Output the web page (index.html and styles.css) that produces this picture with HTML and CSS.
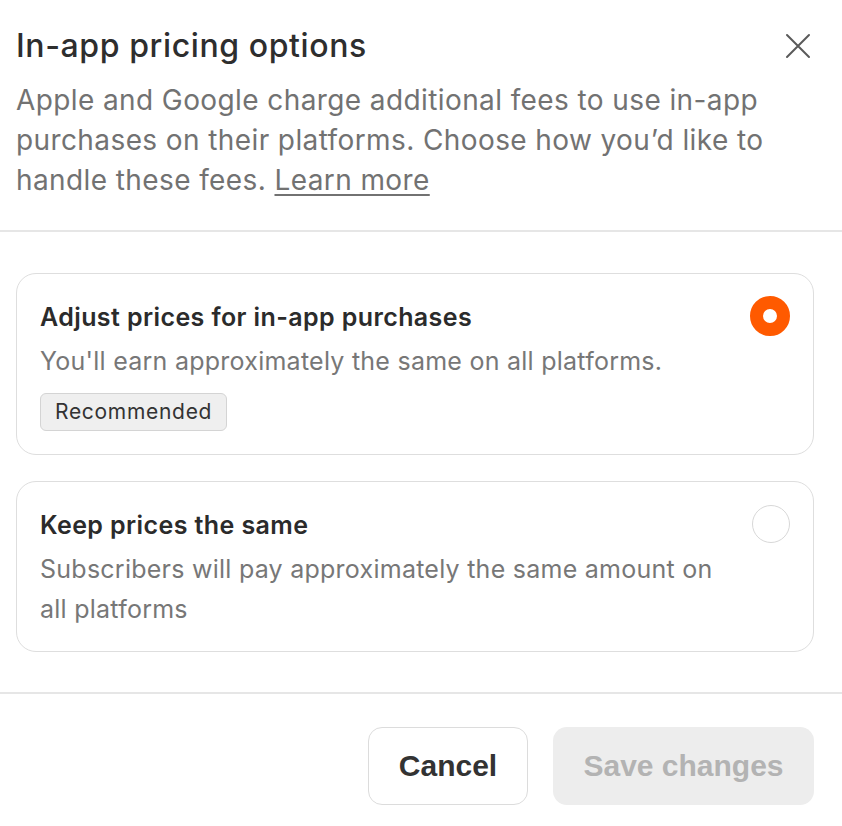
FILE: index.html
```html
<!DOCTYPE html>
<html lang="en">
<head>
    <meta charset="UTF-8">
    <meta name="viewport" content="width=device-width, initial-scale=1.0">
    <title>In-app pricing options</title>
    <link rel="stylesheet" href="styles.css">
</head>
<body>
    <div class="modal">
        <!-- Header -->
        <div class="modal__header">
            <div class="modal__top">
                <h1 class="modal__title">In-app pricing options</h1>
                <button class="modal__close" aria-label="Close">
                    <svg width="26" height="26" viewBox="0 0 26 26" fill="none" stroke="#5a5a5a" stroke-width="2" stroke-linecap="round">
                        <path d="M2 2L24 24M24 2L2 24"/>
                    </svg>
                </button>
            </div>
            <p class="modal__desc">
                Apple and Google charge additional fees to use in-app purchases on their platforms. Choose how you’d like to handle these fees. <a href="#" class="modal__link">Learn more</a>
            </p>
        </div>

        <!-- Options -->
        <div class="modal__options">
            <label class="option option--selected">
                <div class="option__body">
                    <div class="option__title">Adjust prices for in-app purchases</div>
                    <div class="option__text">You'll earn approximately the same on all platforms.</div>
                    <span class="badge">Recommended</span>
                </div>
                <span class="radio radio--on"></span>
            </label>

            <label class="option">
                <div class="option__body">
                    <div class="option__title">Keep prices the same</div>
                    <div class="option__text">Subscribers will pay approximately the same amount on all platforms</div>
                </div>
                <span class="radio"></span>
            </label>
        </div>

        <!-- Footer -->
        <div class="modal__footer">
            <button class="btn btn--cancel">Cancel</button>
            <button class="btn btn--save" disabled>Save changes</button>
        </div>
    </div>
</body>
</html>
```

FILE: styles.css
```css
/* Basic Styling */
body {
    margin: 0;
    padding: 0;
    background-color: #fff;
    font-family: Inter, "Liberation Sans", Arial, sans-serif;
    color: #333;
}

.modal {
    width: 842px;
}

.modal__header {
    padding: 26px 28px 30px 16px;
    border-bottom: 2px solid #e6e6e6;
}

.modal__top {
    display: flex;
    justify-content: space-between;
    align-items: center;
    height: 40px;
    margin-bottom: 14px;
}

.modal__title {
    margin: 0;
    font-size: 32px;
    font-weight: 500;
    letter-spacing: 0.6px;
    line-height: 40px;
    color: #2e2e2e;
}

.modal__close {
    background: none;
    border: none;
    padding: 0;
    margin-right: 3px;
    width: 26px;
    height: 26px;
    cursor: pointer;
}

.modal__desc {
    margin: 0;
    font-size: 28px;
    letter-spacing: 0.4px;
    line-height: 40px;
    color: #727272;
    max-width: 790px;
}

.modal__link {
    color: #727272;
    text-decoration: underline;
    text-underline-offset: 4px;
}

.modal__options {
    display: flex;
    flex-direction: column;
    gap: 26px;
    padding: 41px 28px 40px 16px;
    border-bottom: 2px solid #e6e6e6;
}

.option {
    display: flex;
    align-items: flex-start;
    gap: 16px;
    padding: 27px 23px 22px 23px;
    border: 1.5px solid #dedede;
    border-radius: 20px;
    cursor: pointer;
}

.option__body {
    flex: 1;
}

.option__title {
    font-size: 25px;
    font-weight: 600;
    letter-spacing: 0.4px;
    line-height: 32px;
    color: #2b2b2b;
    margin-bottom: 8px;
}

.option__text {
    font-size: 25px;
    letter-spacing: 0.25px;
    line-height: 40px;
    color: #777;
}

.badge {
    display: inline-block;
    margin-top: 12px;
    margin-bottom: 1px;
    padding: 0 14px;
    height: 36px;
    line-height: 36px;
    font-size: 21px;
    letter-spacing: 0.7px;
    color: #333;
    background-color: #efefef;
    border: 1px solid #d4d4d4;
    border-radius: 6px;
}

.radio {
    flex: none;
    width: 38px;
    height: 38px;
    margin-top: -4px;
    border: 1.5px solid #d8d8d8;
    border-radius: 50%;
    box-sizing: border-box;
}

.radio--on {
    border: 13px solid #ff5a00;
    width: 40px;
    height: 40px;
    margin-top: -5px;
}

.modal__footer {
    display: flex;
    justify-content: flex-end;
    gap: 25px;
    padding: 33px 28px 21px 16px;
}

.btn {
    height: 78px;
    border-radius: 14px;
    font-family: "Liberation Sans", Arial, sans-serif;
    font-size: 30px;
    font-weight: 700;
    cursor: pointer;
}

.btn--cancel {
    width: 160px;
    background-color: #fff;
    color: #333;
    border: 1.5px solid #dcdcdc;
}

.btn--save {
    width: 261px;
    background-color: #ededed;
    color: #b3b3b3;
    border: none;
    cursor: default;
}
```
